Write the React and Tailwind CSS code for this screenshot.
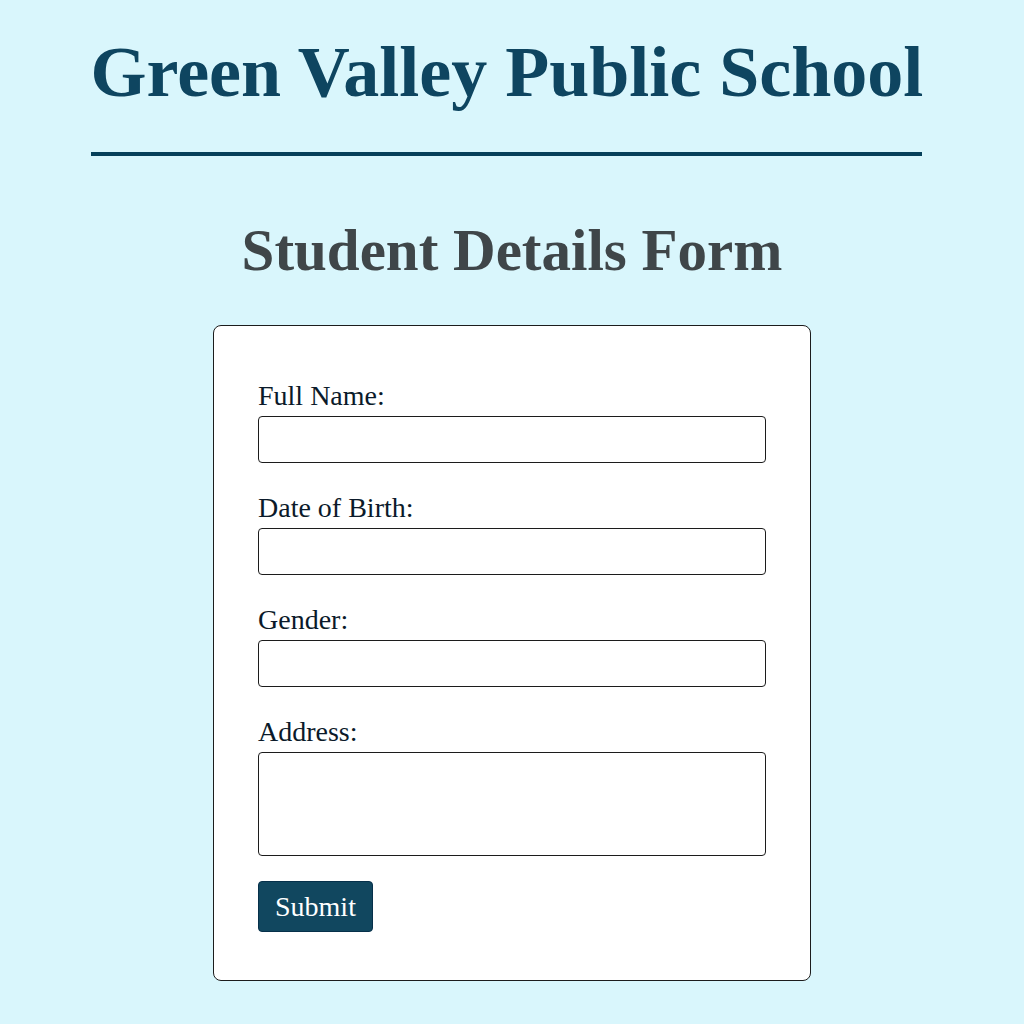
const fieldBox =
  'block w-full rounded border border-[#1c1c1c] bg-white px-3 text-[28px] text-[#0b1a2a] outline-none';

function Field({ id, label, multiline }) {
  return (
    <div className="flex flex-col">
      <label htmlFor={id} className="text-[28px] leading-10">
        {label}
      </label>
      {multiline ? (
        <textarea id={id} name={id} className={`${fieldBox} h-[104px] resize-none`} />
      ) : (
        <input id={id} name={id} type="text" className={`${fieldBox} h-[47px]`} />
      )}
    </div>
  );
}

export default function App() {
  return (
    <main className="flex min-h-screen flex-col items-center bg-[#d9f6fc] px-4 pt-8 pb-11 font-['Liberation_Serif',serif] text-[#0b1a2a]">
      <header className="mr-3 w-full max-w-[831px] border-b-4 border-[#06405a] pb-10">
        <h1 className="text-center text-[72px] leading-[80px] font-bold whitespace-nowrap text-[#0e4560]">
          Green Valley Public School
        </h1>
      </header>
      <h2 className="mt-16 text-center text-[59px] leading-[60px] font-bold text-[#3f4649]">
        Student Details Form
      </h2>
      <form
        className="mt-[45px] flex w-full max-w-[598px] flex-col gap-[25px] rounded-lg border border-[#1c1c1c] bg-white px-11 pt-[50px] pb-12"
        onSubmit={(event) => event.preventDefault()}
      >
        <Field id="fullName" label="Full Name:" />
        <Field id="dateOfBirth" label="Date of Birth:" />
        <Field id="gender" label="Gender:" />
        <Field id="address" label="Address:" multiline />
        <button
          type="submit"
          className="h-[51px] self-start rounded border border-[#06304a] bg-[#11475f] px-4 text-[28px] text-white"
        >
          Submit
        </button>
      </form>
    </main>
  );
}
